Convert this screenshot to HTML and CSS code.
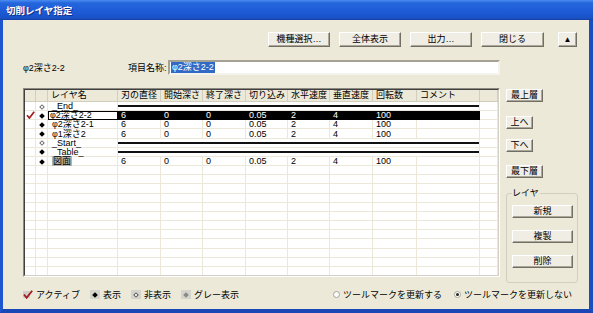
FILE: index.html
```html
<!DOCTYPE html>
<html lang="ja">
<head>
  <meta charset="UTF-8">
  <title>切削レイヤ指定</title>
  <link rel="stylesheet" href="styles.css">
</head>
<body>
<div class="window">
  <div class="titlebar">切削レイヤ指定</div>
  <div class="frame">

    <div class="toolbar">
      <button class="btn tb">機種選択…</button>
      <button class="btn tb">全体表示</button>
      <button class="btn tb">出力…</button>
      <button class="btn tb wide">閉じる</button>
      <button class="btn up">▲</button>
    </div>

    <div class="namerow">
      <span class="cur">φ2深さ2-2</span>
      <span class="namelbl">項目名称:</span>
      <div class="field"><span class="sel">φ2深さ2-2</span></div>
    </div>

    <div class="main">
      <div class="grid">
        <div class="grid-in">
          <table>
            <colgroup>
              <col style="width:11px"><col style="width:12px"><col style="width:70px">
              <col style="width:43px"><col style="width:42px"><col style="width:43px">
              <col style="width:42px"><col style="width:42px"><col style="width:43px">
              <col style="width:44px"><col style="width:63px"><col>
            </colgroup>
            <thead>
              <tr>
                <th></th><th></th><th>レイヤ名</th><th>刃の直径</th><th>開始深さ</th><th>終了深さ</th>
                <th>切り込み</th><th>水平速度</th><th>垂直速度</th><th>回転数</th><th>コメント</th><th></th>
              </tr>
            </thead>
            <tbody>
              <tr>
                <td></td><td class="dcol"><i class="dia off"></i></td><td class="name">_End_</td>
                <td class="rule" colspan="8"></td><td></td>
              </tr>
              <tr class="selrow">
                <td class="ccol"><svg width="9" height="8" viewBox="0 0 9 8"><path d="M1 4.2 L3.4 7 L8.2 0.8" fill="none" stroke="#a3191c" stroke-width="1.7"/></svg></td>
                <td class="dcol"><i class="dia"></i></td><td class="name focus">φ2深さ2-2</td>
                <td class="on">6</td><td class="on">0</td><td class="on">0</td><td class="on">0.05</td>
                <td class="on">2</td><td class="on">4</td><td class="on">100</td><td class="on"></td><td></td>
              </tr>
              <tr>
                <td></td><td class="dcol"><i class="dia"></i></td><td class="name">φ2深さ2-1</td>
                <td>6</td><td>0</td><td>0</td><td>0.05</td><td>2</td><td>4</td><td>100</td><td></td><td></td>
              </tr>
              <tr>
                <td></td><td class="dcol"><i class="dia"></i></td><td class="name">φ1深さ2</td>
                <td>6</td><td>0</td><td>0</td><td>0.05</td><td>2</td><td>4</td><td>100</td><td></td><td></td>
              </tr>
              <tr>
                <td></td><td class="dcol"><i class="dia off"></i></td><td class="name">_Start_</td>
                <td class="rule" colspan="8"></td><td></td>
              </tr>
              <tr>
                <td></td><td class="dcol"><i class="dia"></i></td><td class="name">_Table_</td>
                <td class="rule" colspan="8"></td><td></td>
              </tr>
              <tr>
                <td></td><td class="dcol"><i class="dia"></i></td><td class="name"><span class="hl">図面</span></td>
                <td>6</td><td>0</td><td>0</td><td>0.05</td><td>2</td><td>4</td><td>100</td><td></td><td></td>
              </tr>
              <tr><td></td><td></td><td></td><td></td><td></td><td></td><td></td><td></td><td></td><td></td><td></td><td></td></tr>
              <tr><td></td><td></td><td></td><td></td><td></td><td></td><td></td><td></td><td></td><td></td><td></td><td></td></tr>
              <tr><td></td><td></td><td></td><td></td><td></td><td></td><td></td><td></td><td></td><td></td><td></td><td></td></tr>
              <tr><td></td><td></td><td></td><td></td><td></td><td></td><td></td><td></td><td></td><td></td><td></td><td></td></tr>
              <tr><td></td><td></td><td></td><td></td><td></td><td></td><td></td><td></td><td></td><td></td><td></td><td></td></tr>
              <tr><td></td><td></td><td></td><td></td><td></td><td></td><td></td><td></td><td></td><td></td><td></td><td></td></tr>
              <tr><td></td><td></td><td></td><td></td><td></td><td></td><td></td><td></td><td></td><td></td><td></td><td></td></tr>
              <tr><td></td><td></td><td></td><td></td><td></td><td></td><td></td><td></td><td></td><td></td><td></td><td></td></tr>
              <tr><td></td><td></td><td></td><td></td><td></td><td></td><td></td><td></td><td></td><td></td><td></td><td></td></tr>
              <tr><td></td><td></td><td></td><td></td><td></td><td></td><td></td><td></td><td></td><td></td><td></td><td></td></tr>
              <tr><td></td><td></td><td></td><td></td><td></td><td></td><td></td><td></td><td></td><td></td><td></td><td></td></tr>
              <tr><td></td><td></td><td></td><td></td><td></td><td></td><td></td><td></td><td></td><td></td><td></td><td></td></tr>
              <tr><td></td><td></td><td></td><td></td><td></td><td></td><td></td><td></td><td></td><td></td><td></td><td></td></tr>
            </tbody>
          </table>
        </div>
      </div>

      <div class="side">
        <button class="btn sb">最上層</button>
        <button class="btn sb short up1">上へ</button>
        <button class="btn sb short up2">下へ</button>
        <button class="btn sb up3">最下層</button>
        <fieldset class="group">
          <legend>レイヤ</legend>
          <button class="btn gb">新規</button>
          <button class="btn gb">複製</button>
          <button class="btn gb">削除</button>
        </fieldset>
      </div>
    </div>

    <div class="bottom">
      <span class="item">
        <svg width="10" height="9" viewBox="0 0 10 9"><rect x="0" y="1" width="7" height="7" fill="#cfcdc6"/><path d="M1 4.5 L3.6 7.8 L9.2 0.8" fill="none" stroke="#a3191c" stroke-width="1.8"/></svg>
        アクティブ
      </span>
      <span class="item"><span class="mark"><i></i></span>表示</span>
      <span class="item"><span class="mark off"><i></i></span>非表示</span>
      <span class="item"><span class="mark gray"><i></i></span>グレー表示</span>

      <span class="radios">
        <span class="item"><span class="radio"></span>ツールマークを更新する</span>
        <span class="item"><span class="radio on"><i></i></span>ツールマークを更新しない</span>
      </span>
    </div>

  </div>
</div>
</body>
</html>
```

FILE: styles.css
```css
* {
  box-sizing: border-box;
}

body {
  margin: 0;
  font-family: "Liberation Sans", "Noto Sans CJK JP", sans-serif;
  font-size: 9px;
  color: #000;
}

.window {
  width: 593px;
  height: 313px;
  display: flex;
  flex-direction: column;
}

.titlebar {
  height: 20px;
  padding-left: 6px;
  display: flex;
  align-items: center;
  color: #fff;
  font-weight: bold;
  font-size: 9.5px;
  text-shadow: 1px 1px #0b2f8c;
  background: linear-gradient(#4a8cf0 0, #2466dc 3px, #1d5ad6 12px, #1a52c6 18px, #163f9e 20px);
}

.frame {
  flex: 1;
  display: flex;
  flex-direction: column;
  background: #ece9d8;
  border-left: 3px solid #1e56d0;
  border-right: 4px solid #1a4cc2;
  border-bottom: 4px solid #1a46b6;
}

/* buttons */
.btn {
  font-family: inherit;
  font-size: 9px;
  line-height: 1;
  height: 15px;
  padding: 0;
  color: #000;
  background: #efede4;
  border: 1px solid;
  border-color: #fff #716f64 #716f64 #fff;
  box-shadow: inset -1px -1px #aca899;
  cursor: default;
}

.toolbar {
  display: flex;
  gap: 9px;
  height: 15px;
  margin-top: 12px;
  padding-left: 265px;
}

.tb {
  width: 62px;
}

.tb.wide {
  width: 63px;
}

.up {
  width: 19px;
  margin-left: 5px;
  font-size: 8px;
}

/* name row */
.namerow {
  display: flex;
  align-items: center;
  height: 15px;
  margin-top: 13px;
  padding-left: 20px;
}

.cur {
  width: 105px;
}

.namelbl {
  width: 40px;
}

.field {
  width: 332px;
  height: 15px;
  display: flex;
  align-items: center;
  padding: 0 1px;
  background: #fff;
  border: 2px solid;
  border-color: #a5a293 #f4f3ee #f4f3ee #a5a293;
}

.sel {
  background: #316ac5;
  color: #fff;
  padding: 0 1px;
  line-height: 11px;
}

/* grid */
.main {
  display: flex;
  height: 189px;
  margin-top: 13px;
  padding-left: 20px;
}

.grid {
  width: 477px;
  height: 189px;
  border: 1px solid;
  border-color: #8c8a80 #fff #fff #8c8a80;
}

.grid-in {
  height: 100%;
  overflow: hidden;
  background: #fff;
  border: 1px solid;
  border-color: #404040 #d4d0c8 #d4d0c8 #404040;
}

table {
  width: 473px;
  table-layout: fixed;
  border-collapse: separate;
  border-spacing: 0;
}

th,
td {
  height: 9.17px;
  padding: 0 0 0 3px;
  border-right: 1px solid #ebe8d9;
  border-bottom: 1px solid #ebe8d9;
  white-space: nowrap;
  line-height: 8px;
  font-weight: normal;
  text-align: left;
}

th {
  height: 12px;
  line-height: 11px;
  background: #ece9d8;
  border-right-color: #d2cebd;
  border-bottom-color: #d2cebd;
}

td.name {
  padding-left: 4px;
}

td.dcol,
td.ccol {
  padding: 0;
  text-align: center;
}

td.ccol svg {
  display: block;
  margin: 0 auto;
}

.dia {
  display: inline-block;
  width: 4px;
  height: 4px;
  background: #000;
  transform: rotate(45deg);
  vertical-align: middle;
}

.dia.off {
  background: #fff;
  border: 1px solid #707070;
}

.rule {
  background: linear-gradient(transparent 3px, #111 3px, #111 5px, transparent 5px);
}

td.on {
  background: #000;
  color: #fff;
  border-color: #000;
}

td.focus {
  outline: 1px solid #000;
  outline-offset: -1px;
  padding-left: 2px;
}

.hl {
  background: #b5b3ab;
  padding: 0 1px;
}

/* side buttons */
.side {
  display: flex;
  flex-direction: column;
  align-items: flex-start;
  margin-left: 6px;
  padding-top: 1px;
}

.side > * {
  flex-shrink: 0;
}

.sb {
  width: 37px;
  height: 13px;
}

.sb.short {
  width: 27px;
}

.up1 {
  margin-top: 14px;
}

.up2 {
  margin-top: 10px;
}

.up3 {
  margin-top: 13px;
}

.group {
  width: 71px;
  margin: 10px 0 0;
  padding: 0 4px 14px 5px;
  border: 1px solid #d0d0bf;
  border-radius: 3px;
  display: flex;
  flex-direction: column;
}

.group legend {
  padding: 0 1px 0 0;
  line-height: 10px;
}

.gb {
  width: 61px;
  height: 13px;
  margin-top: 12px;
  flex-shrink: 0;
}

.gb:first-of-type {
  margin-top: 7px;
}

/* legend row */
.bottom {
  display: flex;
  align-items: center;
  height: 11px;
  margin-top: 12px;
  padding-left: 20px;
  padding-right: 17px;
}

.item {
  display: flex;
  align-items: center;
  gap: 3px;
  margin-right: 10px;
}

.mark {
  width: 10px;
  height: 9px;
  display: flex;
  align-items: center;
  justify-content: center;
  background: #d4d3cc;
}

.mark i {
  width: 4px;
  height: 4px;
  background: #000;
  transform: rotate(45deg);
}

.mark.off i {
  background: #fff;
  border: 1px solid #555;
}

.mark.gray i {
  background: #8a8a8a;
}

.radios {
  display: flex;
  margin-left: auto;
}

.radios .item {
  margin-right: 0;
  margin-left: 12px;
}

.radio {
  width: 7px;
  height: 7px;
  display: flex;
  align-items: center;
  justify-content: center;
  border: 1px solid #a3a39a;
  border-radius: 50%;
  background: #fff;
}

.radio.on i {
  width: 3px;
  height: 3px;
  border-radius: 50%;
  background: #222;
}
```
